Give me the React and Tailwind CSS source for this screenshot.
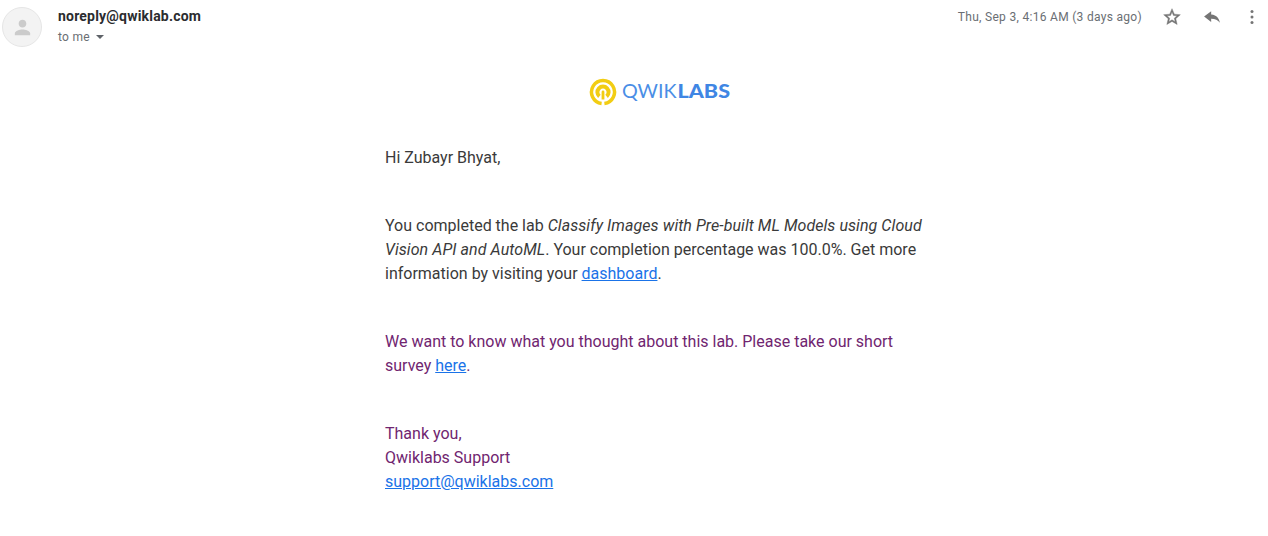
function Avatar() {
  return (
    <div className="flex size-10 items-center justify-center rounded-full border border-[#e6e6e6] bg-[#f3f3f3]">
      <svg viewBox="0 0 24 24" className="size-[23px] fill-[#cbcbcb]">
        <path d="M12 12c2.210 0 4-1.790 4-4s-1.790-4-4-4-4 1.790-4 4 1.790 4 4 4zm0 2c-2.670 0-8 1.340-8 4v2h16v-2c0-2.660-5.330-4-8-4z" />
      </svg>
    </div>
  );
}

function Header() {
  return (
    <header className="flex h-[53px] items-start pl-[2px] pt-[7px]">
      <Avatar />
      <div className="ml-4 flex-1">
        <div className="h-[19px] text-[14px] leading-[19px] font-bold tracking-[0.2px] text-[#2b2c2f]">noreply@qwiklab.com</div>
        <div className="mt-[1px] flex h-5 items-center text-xs tracking-[0.3px] text-[#6a6e73]">
          to me
          <svg viewBox="0 0 8 4" className="ml-[6px] h-1 w-2 fill-[#5f6368]"><path d="M0 0h8L4 4z" /></svg>
        </div>
      </div>
      <div className="flex h-5 items-center pr-[6px] text-[#757575]">
        <span className="mr-[20px] text-xs tracking-[0.3px] text-[#6a6e73]">Thu, Sep 3, 4:16 AM (3 days ago)</span>
        <svg viewBox="0 0 24 24" className="size-5 fill-current stroke-current stroke-[0.5]">
          <path d="M22 9.240l-7.190-.62L12 2 9.190 8.630 2 9.240l5.460 4.730L5.820 21 12 17.270 18.180 21l-1.630-7.030L22 9.240zM12 15.400l-3.760 2.270 1-4.280-3.320-2.880 4.380-.38L12 6.100l1.710 4.040 4.380.38-3.320 2.880 1 4.280L12 15.400z" />
        </svg>
        <svg viewBox="0 0 24 24" className="ml-5 size-5 fill-current">
          <path d="M11 9V5l-8.500 6.500L11 18v-4c5 0 8 1.600 10.500 5-1-5-3.500-9.500-10.500-10z" />
        </svg>
        <svg viewBox="0 0 24 24" className="ml-5 size-5 fill-current">
          <circle cx="12" cy="5.500" r="1.800" /><circle cx="12" cy="12" r="1.800" /><circle cx="12" cy="18.500" r="1.800" />
        </svg>
      </div>
    </header>
  );
}

function Logo() {
  return (
    <div className="flex h-7 items-center">
      <svg viewBox="0 0 28 28" className="size-7 fill-none stroke-[#f2cd13]">
        <path d="M12.600 25.400A11.500 11.500 0 1 1 15.400 25.400" strokeWidth="3.500" />
        <path d="M10.400 18.400A5.600 5.600 0 1 1 17.600 18.400" strokeWidth="4" />
        <path d="M12.600 21.500V14a1.400 1.400 0 0 1 2.800 0V21.500z" className="fill-[#f2cd13] stroke-none" />
      </svg>
      <svg viewBox="0 0 112 28" className="ml-[5px] h-7 w-[112px] fill-[#3f86e4] font-['Lato',sans-serif] text-[19px]">
        <text x="0" y="20" textLength="54.500" lengthAdjust="spacingAndGlyphs" className="fill-[#4a8ee6] font-normal">QWIK</text>
        <text x="55.500" y="20" textLength="52.500" lengthAdjust="spacingAndGlyphs" className="font-black">LABS</text>
      </svg>
    </div>
  );
}

const link = "text-[#1a73e8] underline";

export default function App() {
  return (
    <div className="h-[536px] w-[1268px] overflow-hidden bg-white font-['Roboto',sans-serif]">
      <Header />
      <main className="ml-[385px] w-[550px] pt-[25px] text-base leading-6 tracking-normal text-[#3a3a3a]">
        <div className="pl-[204px]"><Logo /></div>
        <p className="mt-10">Hi Zubayr Bhyat,</p>
        <p className="mt-11">
          You completed the lab <em className="tracking-[0.065px]">Classify Images with Pre-built ML Models using Cloud<br />
          Vision API and AutoML</em>. Your completion percentage was 100.0%. Get more<br />
          information by visiting your <a className={link}>dashboard</a>.
        </p>
        <div className="text-[#702570]">
          <p className="mt-11">
            We want to know what you thought about this lab. Please take our short<br />
            survey <a className={link}>here</a>.
          </p>
          <p className="mt-11">
            Thank you,<br />Qwiklabs Support<br />
            <a className={link}>support@qwiklabs.com</a>
          </p>
        </div>
      </main>
    </div>
  );
}
